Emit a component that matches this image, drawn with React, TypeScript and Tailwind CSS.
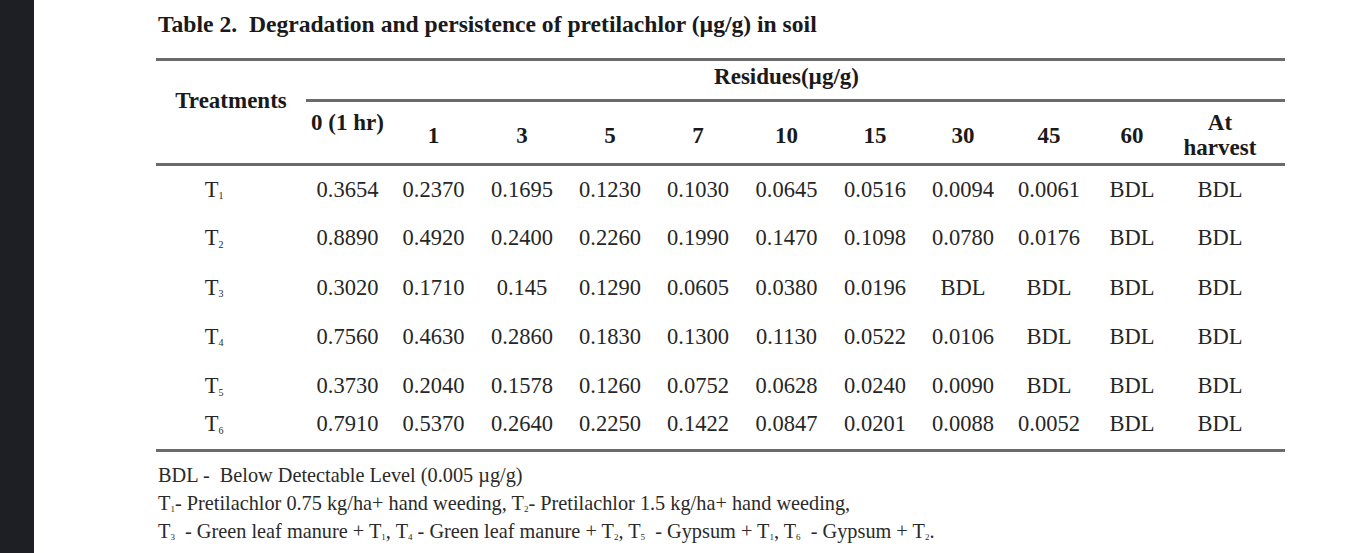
import React from 'react';

// column layout shared by header and body rows
const COLS = "grid grid-cols-[150px_83px_89px_88px_88px_88px_89px_88px_88px_84px_82px_112px]";

const days = ["1", "3", "5", "7", "10", "15", "30", "45", "60"];

const rows: { t: string; vals: string[]; h: string }[] = [
  { t: "1", h: "h-[47px] items-center", vals: ["0.3654", "0.2370", "0.1695", "0.1230", "0.1030", "0.0645", "0.0516", "0.0094", "0.0061", "BDL", "BDL"] },
  { t: "2", h: "h-[50px] items-center", vals: ["0.8890", "0.4920", "0.2400", "0.2260", "0.1990", "0.1470", "0.1098", "0.0780", "0.0176", "BDL", "BDL"] },
  { t: "3", h: "h-[49px] items-center", vals: ["0.3020", "0.1710", "0.145", "0.1290", "0.0605", "0.0380", "0.0196", "BDL", "BDL", "BDL", "BDL"] },
  { t: "4", h: "h-[49px] items-center", vals: ["0.7560", "0.4630", "0.2860", "0.1830", "0.1300", "0.1130", "0.0522", "0.0106", "BDL", "BDL", "BDL"] },
  { t: "5", h: "h-[50px] items-center", vals: ["0.3730", "0.2040", "0.1578", "0.1260", "0.0752", "0.0628", "0.0240", "0.0090", "BDL", "BDL", "BDL"] },
  { t: "6", h: "h-[38px] items-start", vals: ["0.7910", "0.5370", "0.2640", "0.2250", "0.1422", "0.0847", "0.0201", "0.0088", "0.0052", "BDL", "BDL"] },
];

const Rule = () => <div className="h-[3px] bg-[#6b6b6b]" />;

const T = ({ n, small }: { n: string; small?: boolean }) => (
  <span>
    T<sub className={small ? "text-[9px]" : "text-[10px]"}>{n}</sub>
  </span>
);

export default function App() {
  return (
    <div className="flex h-[553px] w-[1366px] overflow-hidden bg-white font-['Liberation_Serif',serif] text-[#262626]">
      <div className="w-[34px] shrink-0 bg-[#1e1f24]" />
      <div className="ml-[122px] w-[1129px]">
        <div className="pl-[2px] pt-[10px] text-[23.6px] font-bold leading-[28px] text-[#1a1a1a]">
          Table 2.&nbsp; Degradation and persistence of pretilachlor (µg/g) in soil
        </div>

        <div className="mt-[20px]">
          <Rule />
        </div>

        {/* header */}
        <div className={`${COLS} grid-rows-[38px_3px_61px] text-[23px] font-bold text-[#1a1a1a]`}>
          <div className="col-start-1 row-start-1 row-end-4 pt-[27px] text-center leading-[26px]">Treatments</div>
          <div className="col-start-2 col-end-13 row-start-1 pt-[3px] pr-[18px] text-center leading-[26px]">Residues(µg/g)</div>
          <div className="col-start-2 col-end-13 row-start-2 bg-[#6b6b6b]" />
          <div className="col-start-2 row-start-3 pt-[8px] text-center leading-[26px]">0 (1 hr)</div>
          {days.map((d, i) => (
            <div key={d} className="row-start-3 pt-[21px] text-center leading-[26px]" style={{ gridColumnStart: i + 3 }}>
              {d}
            </div>
          ))}
          <div className="col-start-12 row-start-3 pt-[8px] pr-[18px] text-center leading-[25px]">
            At
            <br />
            harvest
          </div>
        </div>

        <Rule />

        {/* body */}
        {rows.map((r) => (
          <div key={r.t} className={`${COLS} ${r.h} text-[22.5px] leading-[26px]`}>
            <div className="pr-[34px] text-center">
              <T n={r.t} />
            </div>
            {r.vals.map((v, i) => (
              <div key={i} className={i === 10 ? "pr-[18px] text-center" : "text-center"}>
                {v}
              </div>
            ))}
          </div>
        ))}

        <Rule />

        {/* notes */}
        <div className="mt-[9px] pl-[2px] text-[20.3px] leading-[28px] text-[#2a2a2a]">
          <div>BDL -&nbsp; Below Detectable Level (0.005 µg/g)</div>
          <div>
            <T n="1" small />- Pretilachlor 0.75 kg/ha+ hand weeding, <T n="2" small />- Pretilachlor 1.5 kg/ha+ hand weeding,
          </div>
          <div>
            <T n="3" small />&nbsp; - Green leaf manure + <T n="1" small />, <T n="4" small /> - Green leaf manure + <T n="2" small />,{" "}
            <T n="5" small />&nbsp; - Gypsum + <T n="1" small />, <T n="6" small />&nbsp; - Gypsum + <T n="2" small />.
          </div>
        </div>
      </div>
    </div>
  );
}
